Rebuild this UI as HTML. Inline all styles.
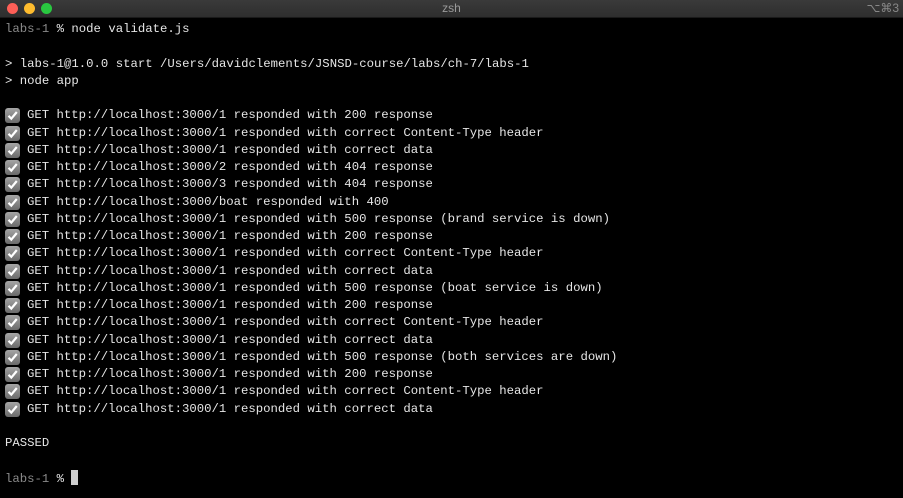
<!DOCTYPE html>
<html><head><style>
html,body{margin:0;padding:0;background:#000;width:903px;height:498px;overflow:hidden}
.tb{position:absolute;left:0;top:0;width:903px;height:17px;background:linear-gradient(#3a3a3a,#2e2e2e);border-bottom:1px solid #1a1a1a}
.dot{position:absolute;top:3px;width:11px;height:11px;border-radius:50%}
.title{position:absolute;top:1px;left:0;width:903px;text-align:center;color:#9a9a9a;font:12px "Liberation Sans",sans-serif}
.kb{position:absolute;right:4px;top:1px;color:#888;font:12px "Liberation Sans","DejaVu Sans",sans-serif}
.t{position:absolute;left:5px;top:21px;font-family:"Liberation Mono",monospace;font-size:12.3px;line-height:17.25px;color:#e6e6e6}
.l{height:17.25px;position:relative;white-space:pre}
.g{color:#8a8a8a}
.cb{position:absolute;left:0;top:1px;width:15px;height:15px;border-radius:3px;background:linear-gradient(#a5a5a5,#6a6a6a)}
.cb svg{position:absolute;left:1px;top:1px}
.c{padding-left:22px}
.cur{display:inline-block;width:7px;height:15px;background:#cfcfcf;vertical-align:-3px}
</style></head><body>
<div class="tb">
<div class="dot" style="left:7px;background:#fe5f57"></div>
<div class="dot" style="left:24px;background:#febc2e"></div>
<div class="dot" style="left:41px;background:#29c840"></div>
<div class="title">zsh</div>
<div class="kb">⌥⌘3</div>
</div>
<div class="t"><div class="l"><span class="g">labs-1</span> % node validate.js</div><div class="l"></div><div class="l">&gt; labs-1@1.0.0 start /Users/davidclements/JSNSD-course/labs/ch-7/labs-1</div><div class="l">&gt; node app</div><div class="l"></div><div id="rows"></div><div class="l"></div><div class="l">PASSED</div><div class="l"></div><div class="l"><span class="g">labs-1</span> % <span class="cur"></span></div></div>
<script>
var r=["/1 responded with 200 response","/1 responded with correct Content-Type header","/1 responded with correct data","/2 responded with 404 response","/3 responded with 404 response","/boat responded with 400","/1 responded with 500 response (brand service is down)","/1 responded with 200 response","/1 responded with correct Content-Type header","/1 responded with correct data","/1 responded with 500 response (boat service is down)","/1 responded with 200 response","/1 responded with correct Content-Type header","/1 responded with correct data","/1 responded with 500 response (both services are down)","/1 responded with 200 response","/1 responded with correct Content-Type header","/1 responded with correct data"];
var h="";r.forEach(function(s){h+='<div class="l"><span class="cb"><svg width="13" height="13" viewBox="0 0 13 13"><path d="M2.5 6.8 L5.3 9.6 L10.8 3" stroke="#fff" stroke-width="2.2" fill="none"/></svg></span><span class="c">GET http://localhost:3000'+s+'</span></div>'});
document.getElementById("rows").innerHTML=h;
</script>
</body></html>
